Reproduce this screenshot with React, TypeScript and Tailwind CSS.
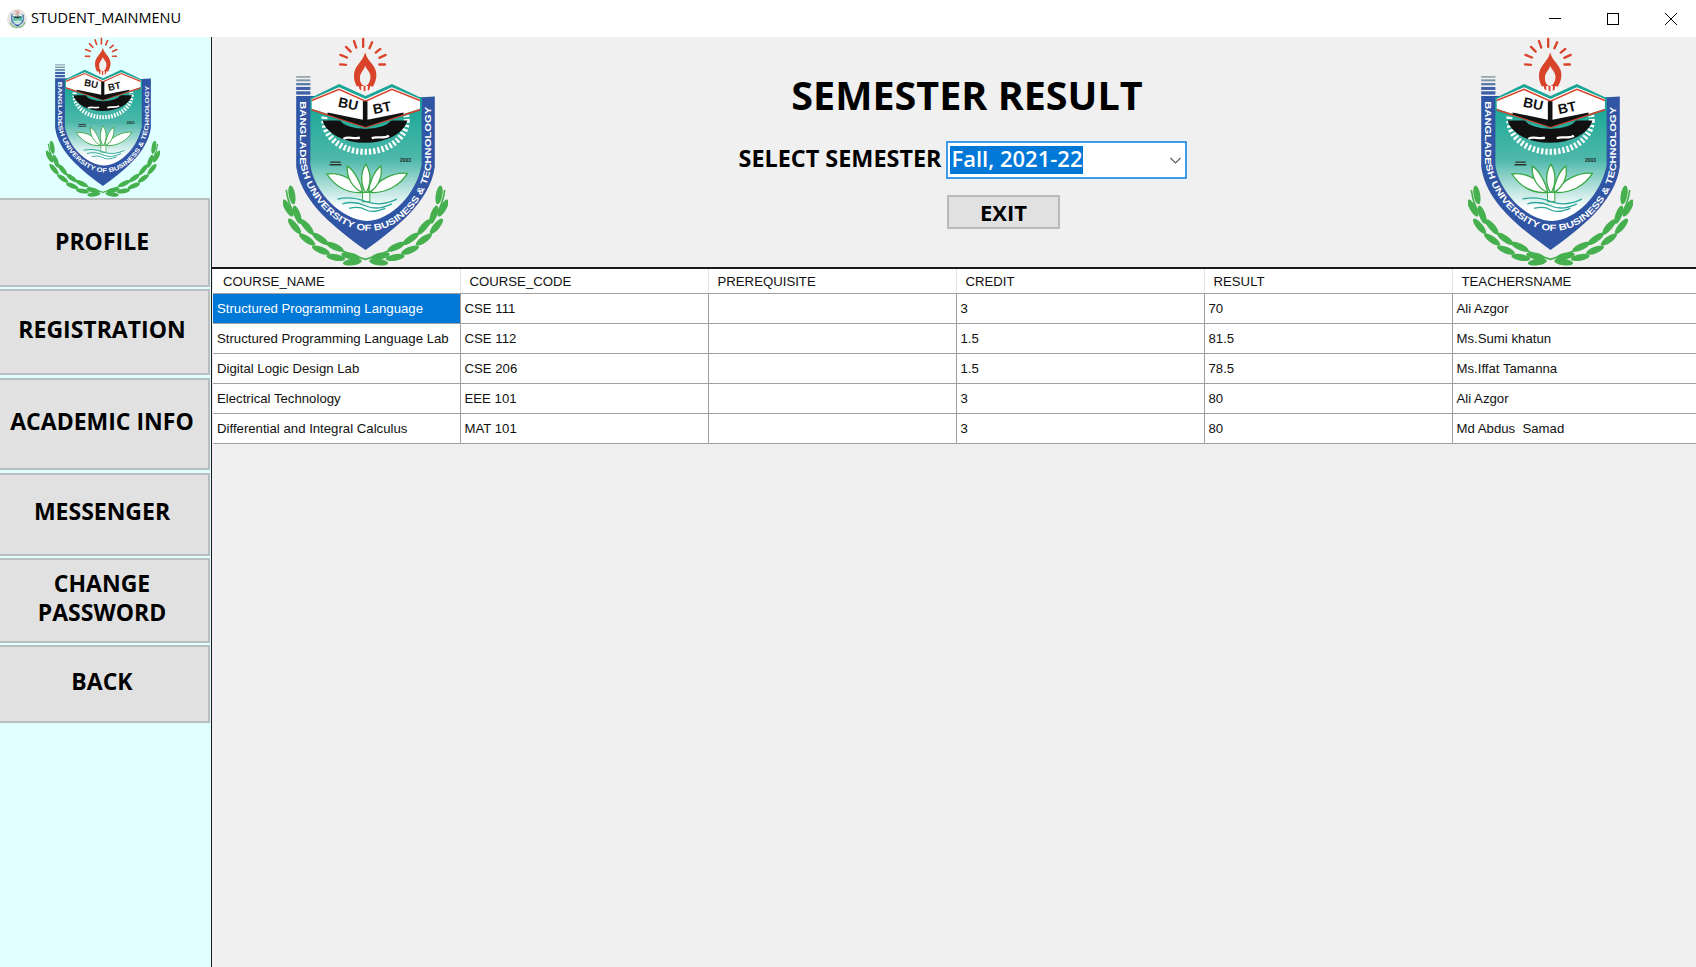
const rows = [
  ['Structured Programming Language', 'CSE 111', '', '3', '70', 'Ali Azgor'],
  ['Structured Programming Language Lab', 'CSE 112', '', '1.5', '81.5', 'Ms.Sumi khatun'],
  ['Digital Logic Design Lab', 'CSE 206', '', '1.5', '78.5', 'Ms.Iffat Tamanna'],
  ['Electrical Technology', 'EEE 101', '', '3', '80', 'Ali Azgor'],
  ['Differential and Integral Calculus', 'MAT 101', '', '3', '80', 'Md Abdus  Samad'],
]

const columns = ['COURSE_NAME', 'COURSE_CODE', 'PREREQUISITE', 'CREDIT', 'RESULT', 'TEACHERSNAME']

// leaves of the laurel, [x, y, angle] on the left branch; the right one is mirrored
const leaves = [
  [62, 495, 80], [50, 535, 60], [78, 555, 70], [70, 590, 50], [108, 592, 50], [108, 630, 35],
  [148, 628, 35], [150, 662, 22], [192, 652, 25], [195, 684, 10], [240, 680, 12], [245, 698, -8],
]

function Logo({ id, className }: { id: string; className: string }) {
  return (
    <svg viewBox="35 18 500 692" preserveAspectRatio="none" className={className}>
      <defs>
        <linearGradient id={`${id}-fill`} x1="0" y1="0" x2="0" y2="1">
          <stop offset="0" stopColor="#12a594" />
          <stop offset="0.5" stopColor="#4db8aa" />
          <stop offset="0.9" stopColor="#ffffff" />
        </linearGradient>
        <path id={`${id}-band`} d="M87 212 L87 400 C110 520 210 604 295 604 C380 604 470 520 485 400 L485 200" />
      </defs>
      {/* rays + flame */}
      <g stroke="#d9432a" strokeWidth="7" strokeLinecap="round">
        <path d="M278 24 L278 48M250 30 L257 50M305 34 L297 52M226 48 L240 62M330 54 L316 65M209 72 L229 80M346 72 L327 81M208 101 L226 102M344 101 L327 101" />
      </g>
      <path d="M284 65 C292 95 320 105 318 135 C316 165 298 182 284 182 C268 182 250 165 250 135 C250 105 276 95 284 65 Z" fill="#d9432a" />
      <path d="M284 105 C290 120 302 125 300 142 C298 158 290 166 284 166 C276 166 268 158 268 142 C268 125 280 120 284 105 Z" fill="#f0f0f0" />
      {/* stripes */}
      <g fill="#3f5fa8">
        <rect x="75" y="136" width="43" height="5" fill="#8fa3a8" />
        <rect x="75" y="146" width="43" height="6" fill="#7f96a8" />
        <rect x="75" y="157" width="43" height="7" fill="#5a7cab" />
        <rect x="75" y="169" width="43" height="9" />
        <rect x="75" y="182" width="43" height="10" />
      </g>
      {/* laurel */}
      <g fill="#46b04f">
        {leaves.map(([x, y, a], i) => (
          <g key={i}>
            <ellipse cx={x} cy={y} rx="29" ry="10" transform={`rotate(${a} ${x} ${y})`} />
            <ellipse cx={570 - x} cy={y} rx="29" ry="10" transform={`rotate(${-a} ${570 - x} ${y})`} />
          </g>
        ))}
      </g>
      <path d="M45 480 Q60 620 285 690 Q510 620 525 480" fill="none" stroke="#46b04f" strokeWidth="5" />
      {/* shield */}
      <path d="M75 196 L118 196 L455 200 L495 198 L495 410 C480 520 370 600 285 662 C200 600 90 520 75 410 Z" fill="#2f55a4" />
      <path d="M118 200 L118 405 C130 490 215 572 290 574 C365 572 440 490 455 405 L455 200 L285 240 Z" fill={`url(#${id}-fill)`} />
      <text fontFamily="'Liberation Sans', sans-serif" fontWeight="700" fontSize="27" fill="#ffffff">
        <textPath href={`#${id}-band`} textLength="975" lengthAdjust="spacingAndGlyphs">BANGLADESH UNIVERSITY OF BUSINESS &amp; TECHNOLOGY</textPath>
      </text>
      {/* gear */}
      <ellipse cx="285" cy="270" rx="125" ry="95" fill="none" stroke="#ffffff" strokeWidth="18" strokeDasharray="7 6" />
      <path d="M155 270 A130 80 0 0 0 412 270 L362 270 A80 35 0 0 1 208 270 Z" fill="#111111" />
      <path d="M218 326 C232 316 250 328 268 322M304 324 C318 316 340 328 356 316" stroke="#ffffff" strokeWidth="7" fill="none" />
      {/* book */}
      <path d="M118 202 L205 160 L285 196 L365 160 L455 202 L455 240 L285 296 L118 240 Z" fill="#1aa596" />
      <path d="M122 205 L205 170 L285 205 L365 170 L450 205 L450 235 L285 288 L122 235 Z" fill="#ffffff" />
      <path d="M122 210 L205 176 L285 212 L365 176 L450 210" fill="none" stroke="#d9432a" strokeWidth="5" />
      <path d="M122 238 L285 290 L450 238" fill="none" stroke="#d9432a" strokeWidth="5" />
      <path d="M170 246 L277 268 L277 212 L291 212 L291 268 L400 246 L400 252 L285 290 L170 252 Z" fill="#111111" />
      <text x="230" y="234" textAnchor="middle" transform="rotate(12 230 234)" fontFamily="'Liberation Sans', sans-serif" fontWeight="700" fontSize="42" fill="#111111">BU</text>
      <text x="338" y="246" textAnchor="middle" transform="rotate(-12 338 246)" fontFamily="'Liberation Sans', sans-serif" fontWeight="700" fontSize="42" fill="#111111">BT</text>
      <path d="M178 396 L210 396M176 404 L212 404" stroke="#333333" strokeWidth="4" />
      <text x="406" y="396" textAnchor="middle" fontFamily="'Liberation Sans', sans-serif" fontWeight="700" fontSize="15" fill="#222222">2003</text>
      {/* lotus */}
      <g fill="#ffffff" stroke="#39a845" strokeWidth="4">
        <path d="M168 432 C205 425 260 450 272 488 C225 490 190 465 168 432 Z" />
        <path d="M412 430 C375 425 315 450 302 488 C350 490 390 465 412 430 Z" />
        <path d="M230 408 C250 420 272 460 276 488 C248 475 226 445 230 408 Z" />
        <path d="M332 408 C312 420 296 460 294 488 C320 475 338 445 332 408 Z" />
        <path d="M286 402 C304 430 302 465 286 490 C270 465 268 430 286 402 Z" />
      </g>
      <rect x="276" y="488" width="22" height="28" fill="#ffffff" stroke="#39a845" strokeWidth="3" />
      <path d="M200 508 Q240 498 285 515 T380 508M215 522 Q250 512 285 528 T365 522M235 536 Q265 528 285 540 T345 536" fill="none" stroke="#2aa79a" strokeWidth="4" />
    </svg>
  )
}

function SideButton({ label, className }: { label: string; className: string }) {
  return (
    <button className={`-ml-[2px] w-[212px] shrink-0 flex items-center justify-center text-center whitespace-pre-line bg-[#e1e1e1] border-2 border-[#b9bdbd] pr-[4px] text-[23px] leading-[29px] font-bold text-black ${className}`}>
      {label}
    </button>
  )
}

export default function App() {
  return (
    <div className="w-[1696px] h-[967px] overflow-hidden flex flex-col bg-[#f0f0f0] font-['Open_Sans',sans-serif]">
      {/* title bar */}
      <div className="h-[37px] shrink-0 bg-white flex items-center">
        <div className="w-[20px] h-[20px] ml-[7px] rounded-full bg-[#e4e4e4] flex items-center justify-center">
          <Logo id="tb" className="w-[15px] h-[18px]" />
        </div>
        <span className="ml-[4px] pb-[2px] text-[14.5px] text-black">STUDENT_MAINMENU</span>
        <div className="ml-auto -mr-[4px] flex items-center text-black">
          <div className="w-[58px] h-[37px] flex items-center justify-center">
            <svg width="12" height="12" viewBox="0 0 12 12"><path d="M0 5.5H12" stroke="currentColor" /></svg>
          </div>
          <div className="w-[58px] h-[37px] flex items-center justify-center">
            <svg width="12" height="12" viewBox="0 0 12 12"><rect x="0.5" y="0.5" width="11" height="11" fill="none" stroke="currentColor" /></svg>
          </div>
          <div className="w-[58px] h-[37px] flex items-center justify-center">
            <svg width="12" height="12" viewBox="0 0 12 12"><path d="M0 0L12 12M12 0L0 12" stroke="currentColor" /></svg>
          </div>
        </div>
      </div>

      <div className="flex-1 flex min-h-0">
        {/* sidebar */}
        <div className="w-[211px] shrink-0 bg-[#e0ffff] flex flex-col">
          <div className="h-[161px] shrink-0 flex items-start pl-[46px]">
            <Logo id="side" className="w-[114px] h-[160px] shrink-0" />
          </div>
          <SideButton label="PROFILE" className="h-[89px] mb-[2px] pb-[2px]" />
          <SideButton label="REGISTRATION" className="h-[86px] mb-[3px] pb-[6px]" />
          <SideButton label="ACADEMIC INFO" className="h-[92px] mb-[3px] pb-[6px]" />
          <SideButton label="MESSENGER" className="h-[83px] mb-[2px] pb-[6px]" />
          <SideButton label={'CHANGE\nPASSWORD'} className="h-[85px] mb-[2px] pb-[6px]" />
          <SideButton label="BACK" className="h-[78px] pb-[6px]" />
        </div>

        {/* main */}
        <div className="flex-1 min-w-0 flex flex-col border-l-[1px] border-[#1a1a1a]">
          <div className="h-[230px] shrink-0 flex items-start pl-[71px] pr-[63px]">
            <Logo id="left" className="w-[165px] h-[229px] shrink-0" />
            <div className="flex-1 flex flex-col items-center">
              <h1 className="mt-[32px] ml-[18px] text-[39.5px] leading-[52px] font-bold text-black">SEMESTER RESULT</h1>
              <div className="mt-[20px] ml-[10px] flex items-center">
                <span className="pb-[2px] text-[23.4px] font-bold text-black">SELECT SEMESTER</span>
                <div className="ml-[5px] w-[241px] h-[38px] bg-white border-2 border-[#3d9be9] flex items-center pl-[2px] pr-[4px]">
                  <span className="h-[28px] leading-[25px] px-[1px] bg-[#0078d7] text-white text-[22px] font-semibold">Fall, 2021-22</span>
                  <svg className="ml-auto" width="11" height="7" viewBox="0 0 11 7"><path d="M0.5 1L5.5 6L10.5 1" fill="none" stroke="#606060" strokeWidth="1.2" /></svg>
                </div>
              </div>
              <button className="mt-[16px] ml-[91px] w-[113px] h-[34px] bg-[#e1e1e1] border-2 border-[#b9b9b9] text-[22px] font-bold text-black flex items-center justify-center">EXIT</button>
            </div>
            <Logo id="right" className="w-[165px] h-[229px] shrink-0" />
          </div>

          {/* result grid */}
          <div className="border-t-2 border-[#1a1a1a] pl-[1px] overflow-hidden font-['Liberation_Sans',sans-serif]">
            <table className="w-[1487px] table-fixed border-collapse text-[13.2px] text-[#111]">
              <thead>
                <tr className="h-[24px] bg-white">
                  {columns.map((c, j) => (
                    <th key={c} className={`${j === 0 ? 'w-[247px] pl-[10px]' : 'w-[248px] pl-[9px]'} pt-[2px] text-left font-normal border-r border-b border-r-[#e4e4e4] border-b-[#a0a0a0]`}>{c}</th>
                  ))}
                </tr>
              </thead>
              <tbody>
                {rows.map((r, i) => (
                  <tr key={i} className="h-[30px] bg-white">
                    {r.map((v, j) => (
                      <td
                        key={j}
                        className={`pl-[4px] pt-[2px] whitespace-pre border-r border-b border-[#a0a0a0] ${i === 0 && j === 0 ? 'bg-[#0078d7] text-white' : ''}`}
                      >
                        {v}
                      </td>
                    ))}
                  </tr>
                ))}
              </tbody>
            </table>
          </div>
        </div>
      </div>
    </div>
  )
}
